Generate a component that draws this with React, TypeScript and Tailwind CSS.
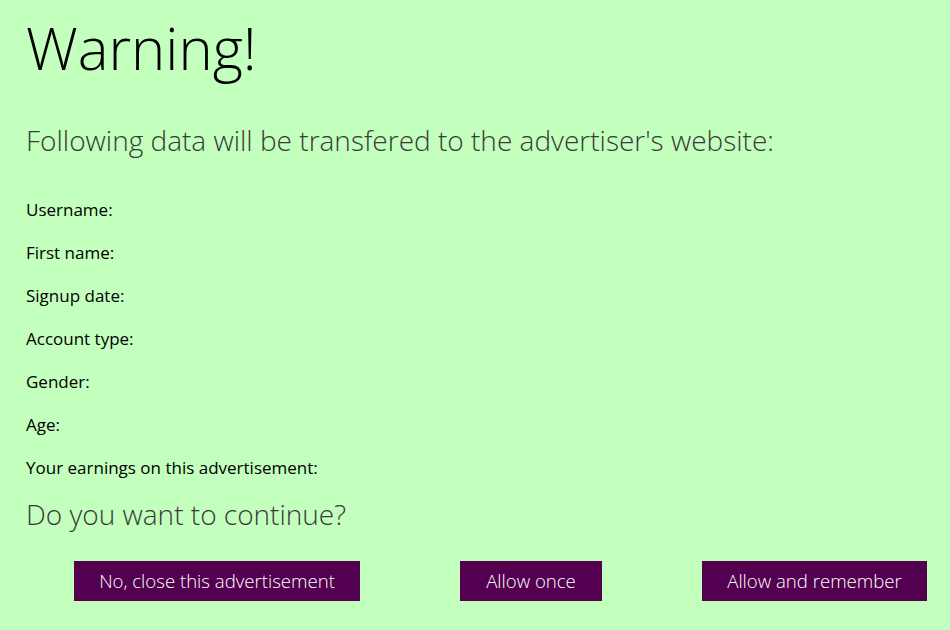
const fields = [
  "Username:",
  "First name:",
  "Signup date:",
  "Account type:",
  "Gender:",
  "Age:",
  "Your earnings on this advertisement:",
];

const buttons = [
  { label: "No, close this advertisement", width: "w-[286px]" },
  { label: "Allow once", width: "w-[142px]" },
  { label: "Allow and remember", width: "w-[225px]" },
];

export default function App() {
  return (
    <div
      className="min-h-[630px] w-full bg-[#c3ffbd] px-[26px] pt-[12px] text-black"
      style={{ fontFamily: '"Open Sans", "Noto Sans", sans-serif' }}
    >
      <h1 className="text-[58px] font-light leading-[72px]">Warning!</h1>

      <h2 className="mt-[38px] text-[28px] font-light leading-[36px] text-[#3a3a3a]">
        Following data will be transfered to the advertiser's website:
      </h2>

      <ul className="mt-[30px]">
        {fields.map((f) => (
          <li key={f} className="text-[17px] leading-[43px]">
            {f}
          </li>
        ))}
      </ul>

      <h3 className="mt-[7px] text-[28px] font-light leading-[36px] text-[#3a3a3a]">
        Do you want to continue?
      </h3>

      <div className="mt-[29px] ml-[48px] flex gap-[100px]">
        {buttons.map((b) => (
          <button
            key={b.label}
            className={`${b.width} h-[40px] shrink-0 bg-[#52004f] text-center text-[18.6px] font-light text-white`}
          >
            {b.label}
          </button>
        ))}
      </div>
    </div>
  );
}
